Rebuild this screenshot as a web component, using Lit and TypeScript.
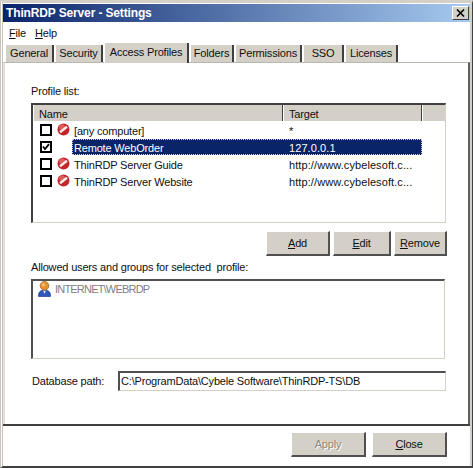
import { LitElement, html, css, svg } from "lit";
import { customElement } from "lit/decorators.js";

const noEntry = html`<svg class="ico" viewBox="0 0 13 13" width="13" height="13">
  <circle cx="6.5" cy="6.5" r="6" fill="#c4242a" />
  <circle cx="5" cy="4.2" r="3" fill="#e97a70" opacity=".65" />
  <path d="M3 9.2 L10 3.8" stroke="#f6ece8" stroke-width="2.4" />
</svg>`;

const userIcon = html`<svg class="user" viewBox="0 0 13 16" width="13" height="16">
  ${svg`<path d="M0.6 15.6 C0 11 2.6 9 6.5 9 C10.4 9 13 11 12.4 15.6 Z" fill="#2f56b8" stroke="#1c2f78" stroke-width=".7"/>
  <path d="M5 9.4 L6.5 13 L8 9.4 Z" fill="#cfe0ff"/>
  <circle cx="6.5" cy="4.8" r="4.3" fill="#e8912c" stroke="#8a5a20" stroke-width=".7"/>
  <circle cx="5.4" cy="3.8" r="1.8" fill="#f6bc6c"/>`}
</svg>`;

@customElement("app-root")
export class AppRoot extends LitElement {
  static styles = css`
    :host {
      display: block;
      width: 473px;
      height: 468px;
      font-family: "Liberation Sans", Arial, sans-serif;
      font-size: 11px;
      letter-spacing: -0.18px;
      color: #101010;
      background: #fff;
      overflow: hidden;
    }
    .window {
      box-sizing: border-box;
      width: 473px;
      height: 468px;
      display: flex;
      flex-direction: column;
      background: #fff;
      border-style: solid;
      border-width: 3px 1px 2px 3px;
      border-color: #d4d0c8 #404040 #404040 #c8c4bc;
      border-left-style: double;
    }
    .inner {
      flex: 1;
      display: flex;
      flex-direction: column;
      border-right: 2px solid #d4d0c8;
      min-height: 0;
    }
    .title {
      height: 18px;
      margin-top: 1px;
      display: flex;
      align-items: center;
      justify-content: space-between;
      padding: 0 1px 0 3px;
      background: linear-gradient(90deg, #0a246a, #a6caf0);
      color: #fff;
      font-weight: bold;
      font-size: 12px;
      letter-spacing: -0.14px;
    }
    .close {
      box-sizing: border-box;
      width: 17px;
      height: 14px;
      background: #d4d0c8;
      border: 1px solid;
      border-color: #fff #404040 #404040 #fff;
      display: flex;
      align-items: center;
      justify-content: center;
    }
    .menu {
      height: 21px;
      display: flex;
      align-items: center;
      gap: 9px;
      padding-left: 6px;
    }
    u { text-underline-offset: 1px; }
    .tabs {
      height: 19px;
      display: flex;
      align-items: flex-end;
      padding-left: 2px;
      gap: 1px;
    }
    .tab {
      box-sizing: border-box;
      height: 17px;
      background: #d4d0c8;
      border-left: 1px solid #fff;
      border-right: 2px solid #404040;
      text-align: center;
      line-height: 16px;
      white-space: nowrap;
    }
    .tab.active {
      height: 20px;
      margin-bottom: -1px;
      line-height: 18px;
      position: relative;
      z-index: 1;
      padding-bottom: 2px;
    }
    .panel {
      flex: 0 0 362px;
      box-sizing: border-box;
      border-top: 1px solid #b8b8b0;
      border-left: 2px solid #e2dfd8;
      border-right: 2px solid #606060;
      padding: 21px 22px 0 26px;
      display: flex;
      flex-direction: column;
    }
    .label { line-height: 14px; }
    .list {
      box-sizing: border-box;
      width: 415px;
      height: 120px;
      margin-top: 5px;
      border-style: solid;
      border-width: 2px 1px 1px 2px;
      border-color: #404040 #d4d0c8 #d4d0c8 #404040;
    }
    .head {
      display: grid;
      grid-template-columns: 250px 139px 1fr;
      height: 16px;
      background: #d4d0c8;
      line-height: 18px;
    }
    .head div {
      padding-left: 5px;
      border-right: 1px solid #404040;
      border-left: 1px solid #fff;
      overflow: hidden;
    }
    .head div:last-child { border-right: none; }
    .row {
      display: grid;
      grid-template-columns: 7px 12px 5px 13px 2px 350px;
      height: 17px;
      align-items: center;
    }
    .check {
      box-sizing: border-box;
      width: 12px;
      height: 12px;
      border: 2px solid #000;
      background: #fff;
      display: flex;
    }
    .cells {
      display: grid;
      grid-template-columns: 211px 139px;
      height: 16px;
      line-height: 18px;
      white-space: nowrap;
    }
    .cells div { padding-left: 2px; height: 16px; overflow: hidden; }
    .cells div + div { padding-left: 6px; letter-spacing: 0.09px; }
    .sel {
      background: #0a246a;
      color: #fff;
      outline: 1px dotted #d4d0c8;
      outline-offset: -1px;
    }
    .buttons {
      display: flex;
      justify-content: flex-end;
      gap: 3px;
      margin: 8px -1px 0 0;
    }
    .btn {
      box-sizing: border-box;
      height: 25px;
      background: #d4d0c8;
      border-style: solid;
      border-width: 1px 2px 2px 1px;
      border-color: #fff #505050 #505050 #fff;
      display: flex;
      align-items: center;
      justify-content: center;
    }
    .add { width: 64px; }
    .edit { width: 58px; }
    .remove { width: 53px; }
    .btn.big { width: 75px; }
    .btn.dis { color: #8a8a84; text-shadow: 1px 1px 0 #fff; }
    .allowed { margin-top: 4px; }
    .users {
      box-sizing: border-box;
      width: 414px;
      height: 80px;
      margin-top: 5px;
      border-style: solid;
      border-width: 2px 1px 1px 2px;
      border-color: #505050 #d4d0c8 #d4d0c8 #505050;
      padding: 0 0 0 5px;
      color: #808080;
      display: flex;
      align-items: flex-start;
      gap: 4px;
      line-height: 17px;
      letter-spacing: -0.8px;
    }
    .path {
      display: flex;
      align-items: center;
      margin-top: 12px;
      padding-left: 1px;
    }
    .path .plabel { width: 86px; }
    .input {
      box-sizing: border-box;
      width: 328px;
      height: 20px;
      border-style: solid;
      border-width: 2px 1px 1px 2px;
      border-color: #505050 #d4d0c8 #d4d0c8 #505050;
      padding-left: 1px;
      line-height: 17px;
    }
    .footer {
      flex: 1;
      border-top: 2px solid #404040;
      display: flex;
      justify-content: flex-end;
      gap: 6px;
      padding: 6px 23px 0 0;
    }
  `;

  render() {
    const rows = [
      { name: "[any computer]", target: "*", check: false, deny: true },
      { name: "Remote WebOrder", target: "127.0.0.1", check: true, deny: false },
      { name: "ThinRDP Server Guide", target: "http://www.cybelesoft.c...", check: false, deny: true },
      { name: "ThinRDP Server Website", target: "http://www.cybelesoft.c...", check: false, deny: true },
    ];
    return html`
      <div class="window">
        <div class="inner">
          <div class="title">
            <span>ThinRDP Server - Settings</span>
            <div class="close">
              <svg viewBox="0 0 9 8" width="9" height="8"><path d="M1 0.5 L8 7.5 M8 0.5 L1 7.5" stroke="#000" stroke-width="1.6" /></svg>
            </div>
          </div>
          <div class="menu"><span><u>F</u>ile</span><span><u>H</u>elp</span></div>
          <div class="tabs">
            <div class="tab" style="width:49px">General</div>
            <div class="tab" style="width:48px">Security</div>
            <div class="tab active" style="width:85px">Access Profiles</div>
            <div class="tab" style="width:44px">Folders</div>
            <div class="tab" style="width:67px">Permissions</div>
            <div class="tab" style="width:41px">SSO</div>
            <div class="tab" style="width:53px">Licenses</div>
          </div>
          <div class="panel">
            <div class="label">Profile list:</div>
            <div class="list">
              <div class="head"><div>Name</div><div>Target</div><div></div></div>
              ${rows.map(
                (r) => html`<div class="row">
                  <span></span>
                  <div class="check">
                    ${r.check
                      ? html`<svg viewBox="0 0 8 8" width="8" height="8"><path d="M1 3.5 L3 6 L7 1.2" fill="none" stroke="#000" stroke-width="1.8" /></svg>`
                      : ""}
                  </div>
                  <span></span>
                  ${r.deny ? noEntry : html`<span></span>`}
                  <span></span>
                  <div class="cells ${r.check ? "sel" : ""}"><div>${r.name}</div><div>${r.target}</div></div>
                </div>`
              )}
            </div>
            <div class="buttons">
              <div class="btn add"><span><u>A</u>dd</span></div>
              <div class="btn edit"><span><u>E</u>dit</span></div>
              <div class="btn remove"><span><u>R</u>emove</span></div>
            </div>
            <div class="label allowed">Allowed users and groups for selected &nbsp;profile:</div>
            <div class="users">${userIcon}<span>INTERNET\\WEBRDP</span></div>
            <div class="path">
              <span class="plabel">Database path:</span>
              <div class="input">C:\\ProgramData\\Cybele Software\\ThinRDP-TS\\DB</div>
            </div>
          </div>
          <div class="footer">
            <div class="btn big dis"><span>Apply</span></div>
            <div class="btn big"><span><u>C</u>lose</span></div>
          </div>
        </div>
      </div>
    `;
  }
}
